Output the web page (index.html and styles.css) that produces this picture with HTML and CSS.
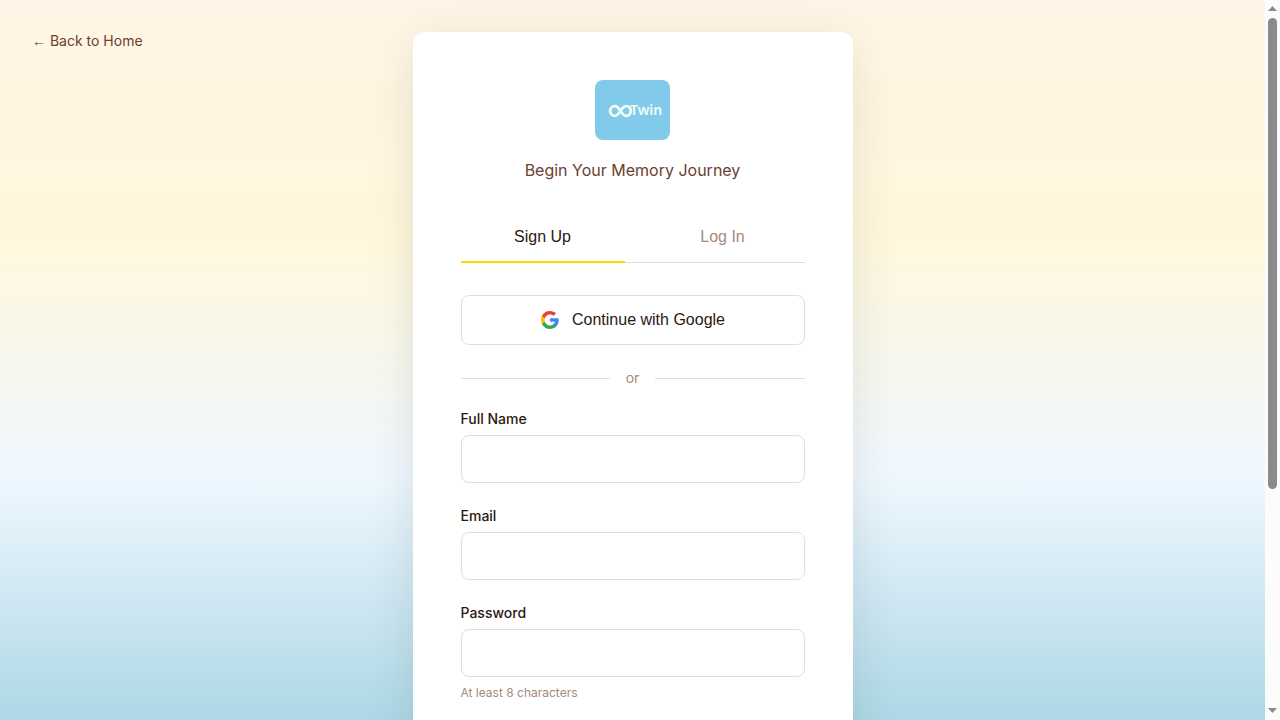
FILE: index.html
```html
<!DOCTYPE html>
<html lang="en">
<head>
<meta charset="utf-8">
<meta name="viewport" content="width=device-width, initial-scale=1">
<title>Sign Up</title>
<link rel="stylesheet" href="styles.css">
</head>
<body>
<div class="scroll-area">
<a class="back-link" href="#"><span class="back-arrow">←</span> Back to Home</a>
<main class="auth-page">
  <section class="auth-card">
    <header class="auth-header">
      <svg class="logo" viewBox="0 0 75 60" role="img" aria-label="Twin">
        <rect width="75" height="60" rx="8" fill="#82caea"/>
        <path d="M25.500 31C23.500 28 22.300 26.200 20 26.200a4.800 4.800 0 0 0 0 9.600C24.500 35.800 26.500 26.200 31 26.200a4.800 4.800 0 0 1 0 9.600C28.800 35.800 27.500 34 25.500 31Z" fill="none" stroke="#f3fbf8" stroke-width="2.800"/>
        <text class="logo-text" x="35" y="35">Twin</text>
      </svg>
      <p class="tagline">Begin Your Memory Journey</p>
    </header>
    <div class="tabs" role="tablist">
      <button class="tab tab-active" type="button" role="tab" aria-selected="true">Sign Up</button>
      <button class="tab" type="button" role="tab" aria-selected="false">Log In</button>
    </div>
    <button class="google-button" type="button">
      <svg class="google-icon" viewBox="-1 -1 20 20" aria-hidden="true">
        <path fill="#4285F4" d="M17.640 9.200c0-.637-.057-1.251-.164-1.840H9v3.481h4.844a4.140 4.140 0 0 1-1.796 2.716v2.259h2.908c1.702-1.567 2.684-3.875 2.684-6.615z"/>
        <path fill="#34A853" d="M9 18c2.430 0 4.467-.806 5.956-2.180l-2.908-2.259c-.806.540-1.837.860-3.048.860-2.344 0-4.328-1.584-5.036-3.711H.957v2.332A8.997 8.997 0 0 0 9 18z"/>
        <path fill="#FBBC05" d="M3.964 10.710A5.410 5.410 0 0 1 3.682 9c0-.593.102-1.170.282-1.710V4.958H.957A8.996 8.996 0 0 0 0 9c0 1.452.348 2.827.957 4.042l3.007-2.332z"/>
        <path fill="#EA4335" d="M9 3.580c1.321 0 2.508.454 3.440 1.345l2.582-2.580C13.463.891 11.426 0 9 0A8.997 8.997 0 0 0 .957 4.958L3.964 7.290C4.672 5.163 6.656 3.580 9 3.580z"/>
      </svg>
      Continue with Google
    </button>
    <div class="divider">or</div>
    <form class="form">
      <div class="field">
        <label class="label" for="name">Full Name</label>
        <input class="input" id="name" type="text">
      </div>
      <div class="field">
        <label class="label" for="email">Email</label>
        <input class="input" id="email" type="email">
      </div>
      <div class="field">
        <label class="label" for="password">Password</label>
        <input class="input" id="password" type="password" aria-describedby="password-hint">
        <small class="hint" id="password-hint">At least 8 characters</small>
      </div>
    </form>
  </section>
</main>
</div>
<div class="scrollbar" aria-hidden="true">
  <svg class="scroll-arrow" viewBox="0 0 9 5"><path d="M4.500 0L9 5H0Z"/></svg>
  <div class="scroll-track"><div class="scroll-thumb"></div></div>
  <svg class="scroll-arrow" viewBox="0 0 9 5"><path d="M4.500 5L9 0H0Z"/></svg>
</div>
</body>
</html>
```
FILE: styles.css
```css
* {
  box-sizing: border-box;
}

body {
  display: flex;
  height: 100vh;
  margin: 0;
  font-family: Inter, "Liberation Sans", sans-serif;
  font-size: 16px;
  line-height: 24px;
  color: #2c1810;
}

.scroll-area {
  position: relative;
  flex: 1;
  overflow-y: auto;
  scrollbar-width: none;
  background: linear-gradient(180deg, #fff5e6 0%, #fff8dc 33%, #f0f8ff 66%, #add8e6 100%);
}

.scrollbar {
  display: flex;
  flex-direction: column;
  align-items: center;
  gap: 7px;
  width: 15px;
  padding: 6px 0 7px;
  background: #fcfcfc;
}

.scroll-arrow {
  width: 9px;
  height: 5px;
  fill: #8b8b8b;
}

.scroll-track {
  flex: 1;
  width: 9px;
}

.scroll-thumb {
  height: 69%;
  border-radius: 5px;
  background: #8b8b8b;
}

.back-link {
  position: absolute;
  top: 29px;
  left: 32px;
  font-size: 14px;
  color: #6b4030;
  text-decoration: none;
}

.back-arrow {
  font-family: "Liberation Sans", sans-serif;
}

.auth-page {
  display: flex;
  justify-content: center;
  padding: 32px;
}

.auth-card {
  width: 100%;
  max-width: 440px;
  padding: 48px 48px 328px;
  background: #fff;
  border-radius: 12px;
  box-shadow: 0 10px 50px rgba(0, 0, 0, 0.1);
}

.auth-header {
  display: flex;
  flex-direction: column;
  align-items: center;
  gap: 18px;
  margin-bottom: 31px;
}

.logo {
  width: 75px;
  height: 60px;
}

.logo-text {
  font-family: "Noto Sans", sans-serif;
  font-size: 14px;
  font-weight: 600;
  fill: #f3fbf8;
}

.tagline {
  margin: 0;
  color: #6b4030;
}

.tabs {
  display: flex;
  gap: 16px;
  margin-bottom: 32px;
  border-bottom: 1px solid #e5dcd5;
}

.tab {
  flex: 1;
  margin-bottom: -1px;
  padding: 12px;
  border: 0;
  border-bottom: 2px solid transparent;
  background: none;
  font-family: "Liberation Sans", sans-serif;
  font-size: 16px;
  line-height: 24px;
  color: #a68a7b;
}

.tab-active {
  border-bottom-color: #ffd700;
  color: #2c1810;
}

.google-button {
  display: flex;
  align-items: center;
  justify-content: center;
  gap: 12px;
  width: 100%;
  padding: 12px;
  border: 1px solid #e5dcd5;
  border-radius: 8px;
  background: #fff;
  font-family: "Liberation Sans", sans-serif;
  font-size: 16px;
  line-height: 24px;
  color: #2c1810;
}

.google-icon {
  width: 20px;
  height: 20px;
}

.divider {
  display: flex;
  align-items: center;
  gap: 16px;
  margin: 21px 0 17px;
  font-size: 14px;
  color: #a68a7b;
}

.divider::before,
.divider::after {
  content: "";
  flex: 1;
  height: 1px;
  background: #e5dcd5;
}

.form {
  display: flex;
  flex-direction: column;
  gap: 21px;
}

.field {
  display: flex;
  flex-direction: column;
}

.label {
  margin-bottom: 4px;
  font-size: 14px;
  font-weight: 500;
}

.input {
  width: 100%;
  height: 48px;
  padding: 12px 16px;
  border: 1px solid #e5dcd5;
  border-radius: 8px;
  background: #fff;
  font: inherit;
  color: inherit;
}

.hint {
  margin-top: 4px;
  font-size: 12px;
  color: #a68a7b;
}
```
